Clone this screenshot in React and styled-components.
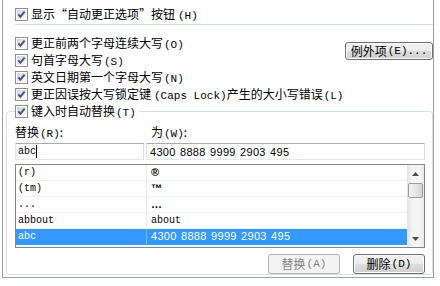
import styled, { createGlobalStyle } from "styled-components";

const GlobalStyle = createGlobalStyle`
  html, body {
    margin: 0;
    padding: 0;
    background: #fff;
  }
  body {
    font-family: "Noto Sans CJK SC", "Liberation Sans", sans-serif;
    font-size: 12px;
    color: #000;
  }
`;

const Page = styled.div`
  width: 440px;
  height: 286px;
  background: #fff;
  overflow: hidden;
`;

const Panel = styled.div`
  margin-left: 2px;
  width: 430px;
  height: 277px;
  border: 1px solid #a0a0a0;
  border-top: none;
  display: flex;
  flex-direction: column;
`;

const Row = styled.label`
  height: 17px;
  display: flex;
  align-items: center;
  gap: 3px;
  white-space: nowrap;
  line-height: 17px;
`;

const TopRow = styled(Row)`
  margin: 6px 0 0 12px;
`;

const Separator = styled.div`
  margin: 1px 0 0 12px;
  height: 1px;
  background: #d5dfe5;
`;

const Options = styled.div`
  margin: 10px 0 0 12px;
  display: flex;
  align-items: flex-start;
`;

const OptionList = styled.div`
  display: flex;
  flex-direction: column;
`;

const Mn = styled.span`
  font-family: "Liberation Mono", monospace;
  font-size: 11px;
  margin-left: ${(p) => (p.$gap ? p.$gap : 1)}px;
`;

const Button = styled.button`
  box-sizing: border-box;
  width: ${(p) => p.$w}px;
  height: ${(p) => p.$h}px;
  padding: 0;
  margin: 0;
  font-family: "Noto Sans CJK SC", sans-serif;
  font-size: 12px;
  line-height: 1;
  color: ${(p) => (p.disabled ? "#838383" : "#000")};
  border: 1px solid ${(p) => (p.disabled ? "#adb2b5" : "#707070")};
  border-radius: 3px;
  background: ${(p) =>
    p.disabled
      ? "#f4f4f4"
      : "linear-gradient(#f2f2f2 0%, #ebebeb 50%, #dddddd 51%, #cfcfcf 100%)"};
  box-shadow: inset 0 0 0 1px ${(p) => (p.disabled ? "#f4f4f4" : "#fcfcfc")};
  display: flex;
  align-items: center;
  justify-content: center;
`;

const ExceptionButton = styled(Button)`
  margin: 7px 0 0 auto;
`;

const Group = styled.fieldset`
  box-sizing: border-box;
  margin: 0 0 0 3px;
  width: 427px;
  padding: 0 7px 0 8px;
  border: 1px solid #d5dfe5;
  border-radius: 3px;
  min-width: 0;
`;

const Legend = styled.legend`
  padding: 0 3px 0 0;
  margin: 0;
`;

const Fields = styled.div`
  display: grid;
  grid-template-columns: 129px 279px;
  column-gap: 2px;
`;

const FieldLabel = styled.div`
  margin-top: 6px;
  height: 17px;
  line-height: 12px;
  padding-left: ${(p) => (p.$indent ? 5 : 0)}px;
  white-space: nowrap;
`;

const TextBox = styled.div`
  box-sizing: border-box;
  height: 17px;
  border: 1px solid;
  border-color: #abadb3 #dbdfe6 #e3e9ef #e2e3ea;
  padding-left: ${(p) => (p.$mono ? 2 : 3)}px;
  display: flex;
  align-items: center;
  font-family: ${(p) =>
    p.$mono ? '"Liberation Mono", monospace' : '"Liberation Sans", sans-serif'};
  font-size: ${(p) => (p.$mono ? 10 : 11)}px;
  letter-spacing: ${(p) => (p.$mono ? 0 : 0.3)}px;
  word-spacing: ${(p) => (p.$mono ? 0 : 1)}px;
  white-space: pre;
`;

const Caret = styled.span`
  display: inline-block;
  width: 1px;
  height: 13px;
  background: #000;
`;

const ListBox = styled.div`
  box-sizing: border-box;
  margin-top: 4px;
  height: 84px;
  border: 1px solid #828790;
  display: flex;
`;

const Rows = styled.div`
  flex: 1;
  display: flex;
  flex-direction: column;
`;

const ListRow = styled.div`
  box-sizing: border-box;
  height: 16px;
  display: grid;
  grid-template-columns: 131px 1fr;
  border-bottom: 1px solid ${(p) => (p.$selected ? "#3399ff" : "#f0f0f0")};
  background: ${(p) => (p.$selected ? "#3399ff" : "#fff")};
  color: ${(p) => (p.$selected ? "#fff" : "#000")};
`;

const FromCell = styled.div`
  padding-left: 2px;
  border-right: 1px solid ${(p) => (p.$selected ? "#7ab8ff" : "#ededed")};
  font-family: "Liberation Mono", monospace;
  font-size: 10px;
  line-height: 15px;
  white-space: pre;
`;

const ToCell = styled.div`
  padding-left: 4px;
  font-family: ${(p) =>
    p.$sans ? '"Liberation Sans", sans-serif' : '"Liberation Mono", monospace'};
  font-size: ${(p) => (p.$sans ? 11 : 10)}px;
  font-weight: ${(p) => (p.$bold ? 700 : 400)};
  letter-spacing: ${(p) => (p.$wide ? 0.3 : 0)}px;
  word-spacing: ${(p) => (p.$wide ? 1 : 0)}px;
  line-height: 15px;
  white-space: pre;
`;

const ScrollBar = styled.div`
  width: 17px;
  display: flex;
  flex-direction: column;
  background: linear-gradient(90deg, #e3e3e3, #f5f5f5 30%, #f5f5f5 70%, #e8e8e8);
`;

const Arrow = styled.div`
  height: 17px;
  display: flex;
  align-items: center;
  justify-content: center;
`;

const Thumb = styled.div`
  box-sizing: border-box;
  margin: 1px 1px 0 1px;
  height: 15px;
  border: 1px solid #9a9a9a;
  border-radius: 2px;
  background: linear-gradient(90deg, #f3f3f3, #e6e6e6 50%, #d4d4d4);
`;

const Track = styled.div`
  flex: 1;
`;

const Actions = styled.div`
  margin-top: 6px;
  display: flex;
  justify-content: flex-end;
  gap: 13px;
`;

const CheckBox = () => (
  <svg width="13" height="13" viewBox="0 0 13 13">
    <defs>
      <linearGradient id="cbfill" x1="0" y1="0" x2="1" y2="1">
        <stop offset="0" stopColor="#d2d2d2" />
        <stop offset="1" stopColor="#fbfbfb" />
      </linearGradient>
    </defs>
    <rect x="0.5" y="0.5" width="12" height="12" fill="#fff" stroke="#8e8f8f" />
    <rect x="2" y="2" width="9" height="9" fill="url(#cbfill)" />
    <path d="M3.3 6.4 L5.4 8.7 L9.6 3.6" stroke="#3c5593" strokeWidth="1.9" fill="none" />
  </svg>
);

const Tri = ({ up }) => (
  <svg width="7" height="4" viewBox="0 0 7 4">
    <path d={up ? "M0 4 L3.5 0 L7 4 Z" : "M0 0 L3.5 4 L7 0 Z"} fill="#4d4d4d" />
  </svg>
);

const entries = [
  { from: "(r)", to: "®", sans: true, bold: true },
  { from: "(tm)", to: "™", sans: true, bold: true },
  { from: "...", to: "…", sans: true, bold: true },
  { from: "abbout", to: "about" },
  { from: "abc", to: "4300 8888 9999 2903 495", sans: true, wide: true, selected: true },
];

const App = () => {
  return (
    <Page>
      <GlobalStyle />
      <Panel>
        <TopRow>
          <CheckBox />
          <span>
            显示“自动更正选项”按钮<Mn $gap={3}>(H)</Mn>
          </span>
        </TopRow>
        <Separator />
        <Options>
          <OptionList>
            <Row>
              <CheckBox />
              <span>
                更正前两个字母连续大写<Mn>(O)</Mn>
              </span>
            </Row>
            <Row>
              <CheckBox />
              <span>
                句首字母大写<Mn>(S)</Mn>
              </span>
            </Row>
            <Row>
              <CheckBox />
              <span>
                英文日期第一个字母大写<Mn>(N)</Mn>
              </span>
            </Row>
            <Row>
              <CheckBox />
              <span>
                更正因误按大写锁定键<Mn $gap={3}>(Caps Lock)</Mn>产生的大小写错误
                <Mn>(L)</Mn>
              </span>
            </Row>
          </OptionList>
          <ExceptionButton $w={88} $h={18}>
            例外项<Mn>(E)...</Mn>
          </ExceptionButton>
        </Options>
        <Group>
          <Legend>
            <Row>
              <CheckBox />
              <span>
                键入时自动替换<Mn>(T)</Mn>
              </span>
            </Row>
          </Legend>
          <Fields>
            <FieldLabel>
              替换<Mn>(R)</Mn>:
            </FieldLabel>
            <FieldLabel $indent>
              为<Mn>(W)</Mn>:
            </FieldLabel>
            <TextBox $mono>
              abc
              <Caret />
            </TextBox>
            <TextBox>4300 8888 9999 2903 495</TextBox>
          </Fields>
          <ListBox>
            <Rows>
              {entries.map((e) => (
                <ListRow key={e.from} $selected={e.selected}>
                  <FromCell $selected={e.selected}>{e.from}</FromCell>
                  <ToCell $sans={e.sans} $bold={e.bold} $wide={e.wide}>
                    {e.to}
                  </ToCell>
                </ListRow>
              ))}
            </Rows>
            <ScrollBar>
              <Arrow>
                <Tri up />
              </Arrow>
              <Thumb />
              <Track />
              <Arrow>
                <Tri />
              </Arrow>
            </ScrollBar>
          </ListBox>
          <Actions>
            <Button $w={72} $h={20} disabled>
              替换<Mn>(A)</Mn>
            </Button>
            <Button $w={72} $h={20}>
              删除<Mn>(D)</Mn>
            </Button>
          </Actions>
        </Group>
      </Panel>
    </Page>
  );
};

export default App;
